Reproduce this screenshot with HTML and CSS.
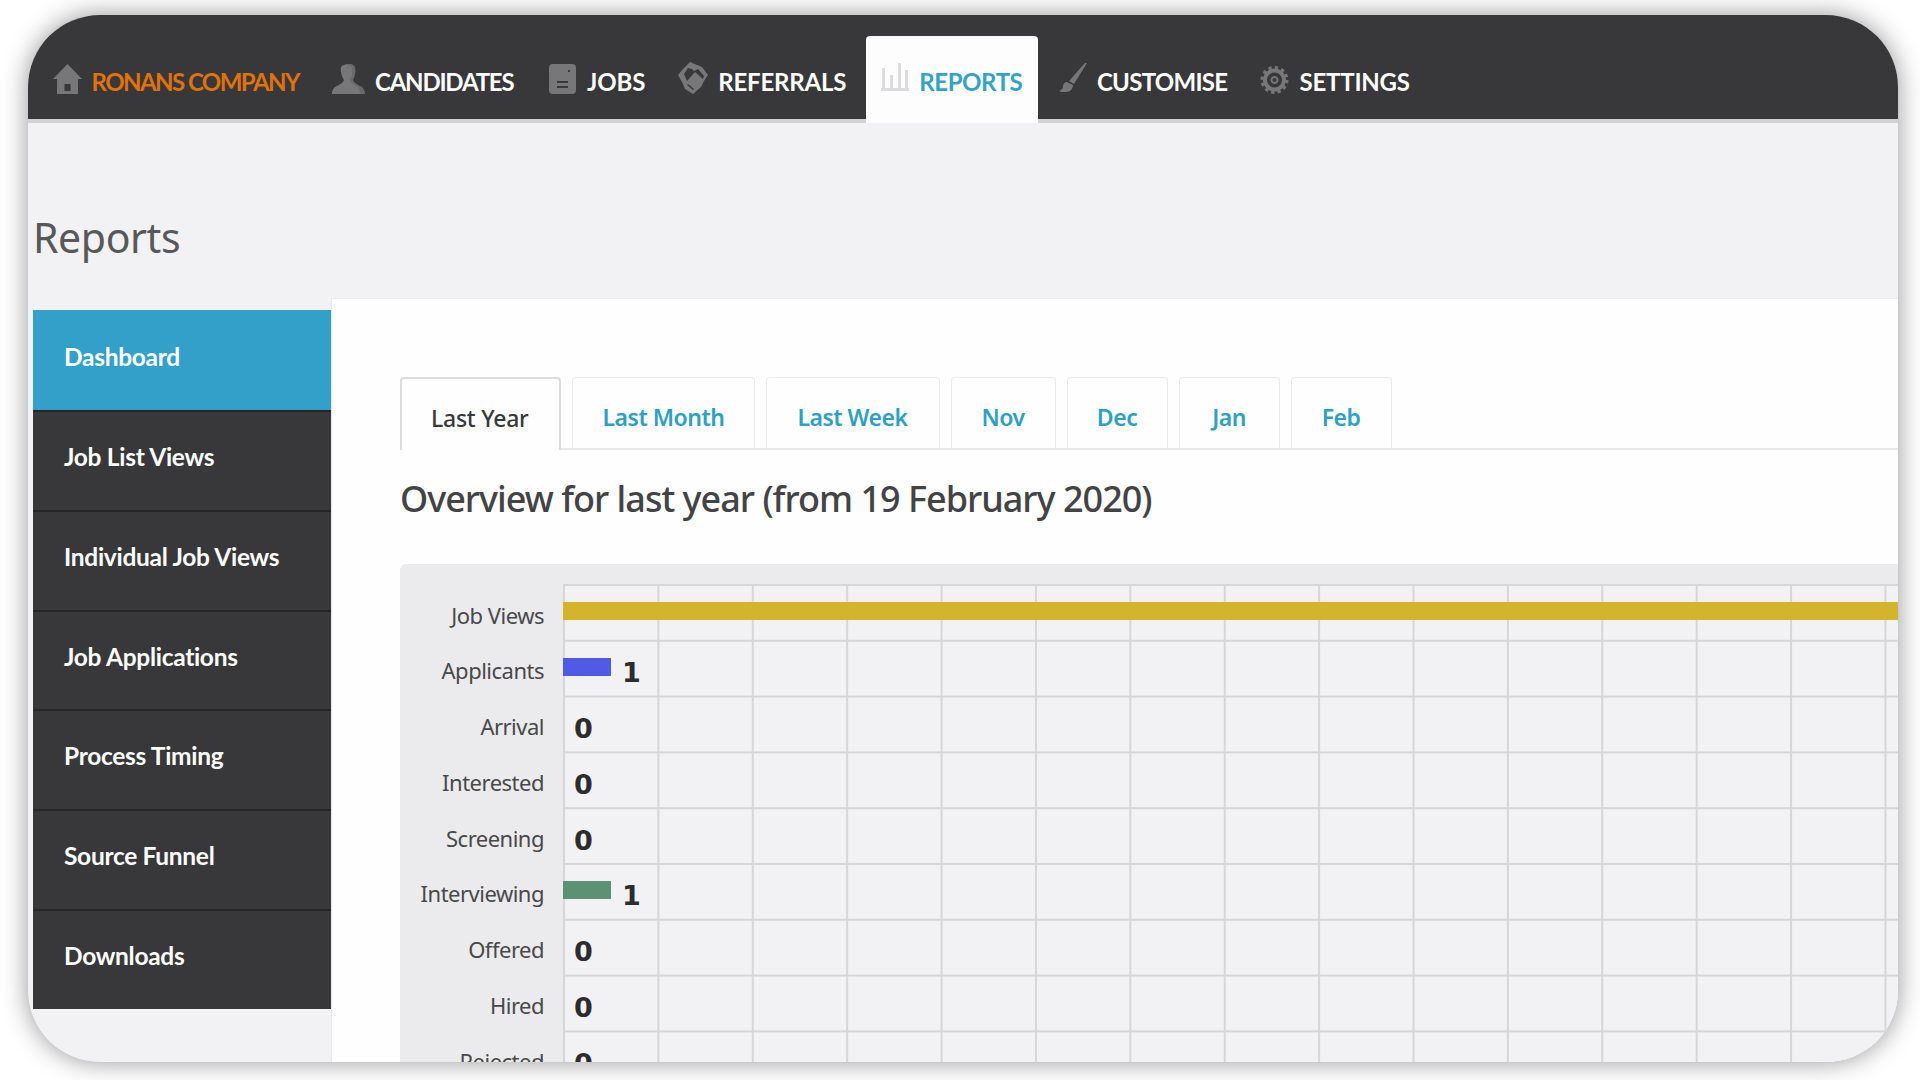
FILE: index.html
```html
<!DOCTYPE html>
<html lang="en">
<head>
<meta charset="utf-8">
<title>Reports</title>
<link rel="stylesheet" href="styles.css">
</head>
<body>
<div class="frame">
  <nav class="nav">
    <a class="nav-item">
      <svg class="ico w29" viewBox="0 0 29 30"><path d="M14.500 0 29 15h-4v15H4V15H0zM11.500 20v7h6v-7z" fill-rule="evenodd"/></svg>
      <span class="brand">RONANS COMPANY</span>
    </a>
    <a class="nav-item">
      <svg class="ico w33" viewBox="0 0 33 30"><path class="back" d="M12 1c3-2 9-2 11 2 1 4 0 9-2 13 1 3 4 4 7 6 3 1 5 4 5 8H14z"/><path d="M9 3c2-3 9-3 11 1 1 4 0 9-2 12 1 3 4 4 6 6 3 1 4 4 4 8H0c0-4 2-7 5-8 3-2 6-3 7-6-2-3-4-9-3-13z"/></svg>
      <span>CANDIDATES</span>
    </a>
    <a class="nav-item">
      <svg class="ico w27" viewBox="0 0 27 30"><path d="M4 0h19q4 0 4 4v22q0 4-4 4H4q-4 0-4-4V4q0-4 4-4zM19 6v2h2V6zM8 17v2h11v-2zM8 22v2h11v-2z" fill-rule="evenodd"/></svg>
      <span>JOBS</span>
    </a>
    <a class="nav-item">
      <svg class="ico w30 ref" viewBox="0 0 30 32"><path d="M12 0 24 5l6 8-4 6-3 6-8 7-8-5-3-7-4-7 5-6zM10 6 6 12l3 7 8-9 8 7 1-3-6-7-4 2-2-2zM9 23l6 5 1-1-6-5z" fill-rule="evenodd"/></svg>
      <span>REFERRALS</span>
    </a>
    <a class="nav-item active">
      <svg class="ico w28 pale" viewBox="0 0 28 28"><path d="M1 5h3v23H1zM9 12h3v16H9zM17 0h3v28h-3zM24 7h3v21h-3zM0 25h28v3H0z"/></svg>
      <span>REPORTS</span>
    </a>
    <a class="nav-item">
      <svg class="ico w28 brush" viewBox="0 0 28 30"><path d="M26 0h2L15 21l-5-3zM8 19l6 3c0 4-3 7-7 7-3 0-6 0-7-1 3-1 4-3 4-5s2-4 4-4z"/></svg>
      <span>CUSTOMISE</span>
    </a>
    <a class="nav-item">
      <svg class="ico w29 gear" viewBox="0 0 29 30"><circle class="teeth" cx="14.500" cy="15" r="12.500"/><path d="M14.500 3.500a11.500 11.500 0 1 0 .01 0zM14.500 7.500a7.500 7.500 0 1 1-.01 0zM14.500 11a4 4 0 1 0 .01 0zM14.500 13a2 2 0 1 1-.01 0z" fill-rule="evenodd"/></svg>
      <span>SETTINGS</span>
    </a>
  </nav>
  <div class="nav-rule"></div>
  <main class="page">
    <h1 class="title">Reports</h1>
    <div class="body">
      <ul class="side">
        <li class="side-item current">Dashboard</li>
        <li class="side-item">Job List Views</li>
        <li class="side-item">Individual Job Views</li>
        <li class="side-item">Job Applications</li>
        <li class="side-item">Process Timing</li>
        <li class="side-item">Source Funnel</li>
        <li class="side-item">Downloads</li>
      </ul>
      <section class="content">
        <div class="tabs">
          <a class="tab on">Last Year</a>
          <a class="tab">Last Month</a>
          <a class="tab">Last Week</a>
          <a class="tab short wide">Nov</a>
          <a class="tab short">Dec</a>
          <a class="tab short">Jan</a>
          <a class="tab short">Feb</a>
        </div>
        <h2 class="heading">Overview for last year (from 19 February 2020)</h2>
        <div class="chart">
          <div class="labels">
            <div class="label">Job Views</div>
            <div class="label">Applicants</div>
            <div class="label">Arrival</div>
            <div class="label">Interested</div>
            <div class="label">Screening</div>
            <div class="label">Interviewing</div>
            <div class="label">Offered</div>
            <div class="label">Hired</div>
            <div class="label">Rejected</div>
          </div>
          <div class="plot">
            <div class="row"><i class="bar gold"></i></div>
            <div class="row"><i class="bar blue"></i><b class="val">1</b></div>
            <div class="row"><b class="val zero">0</b></div>
            <div class="row"><b class="val zero">0</b></div>
            <div class="row"><b class="val zero">0</b></div>
            <div class="row"><i class="bar green"></i><b class="val">1</b></div>
            <div class="row"><b class="val zero">0</b></div>
            <div class="row"><b class="val zero">0</b></div>
            <div class="row"><b class="val zero">0</b></div>
          </div>
        </div>
      </section>
    </div>
  </main>
</div>
</body>
</html>
```
FILE: styles.css
```css
* { box-sizing: border-box; }
html, body { margin: 0; height: 100%; }
body { background: #fff; overflow: hidden; font-family: "Noto Sans", "Liberation Sans", sans-serif; }
.frame {
  width: 1870px; height: 1047px; margin: 15px 0 0 28px;
  background: #f2f2f4; border-radius: 72px; overflow: hidden;
  position: relative;
  box-shadow: 0 0 26px rgba(0,0,0,.42);
  display: flex; flex-direction: column;
}
.nav { flex: none; height: 104px; background: #38383a; display: flex; align-items: flex-end; padding-left: 8px; position: relative; z-index: 1; }
.nav-item {
  height: 84px; padding: 29px 16.500px 0; display: flex; align-items: flex-start; gap: 10px;
  font-family: Lato, sans-serif; font-weight: 700; font-size: 24px; line-height: 40px; letter-spacing: -.7px; color: #fff;
}
.nav-item span { margin-top: -2px; }
.nav-item span.brand { color: #e0720c; letter-spacing: -1.55px; }
.nav-item:nth-child(2) { letter-spacing: -1.2px; padding-right: 19px; }
.nav-item:nth-child(3) { letter-spacing: -.1px; gap: 11px; }
.nav-item:nth-child(4) { letter-spacing: -.2px; padding-right: 17px; }
.nav-item:nth-child(7) { letter-spacing: -.2px; }
.nav-item.active { background: #fdfdfe; border-radius: 4px 4px 0 0; height: 87px; margin: 0 4px -4px 3px; padding: 27px 16px 0 15px; color: #33a2c6; letter-spacing: -.4px; }
.nav-item.active span { margin-top: -1px; }
.ico { height: 30px; fill: #777779; flex: none; }
.ico .back { fill: #69696b; }
.ico .teeth { fill: none; stroke: #777779; stroke-width: 3; stroke-dasharray: 3.300 3.240; }
.ico.pale { fill: #dcdcde; height: 28px; }
.ico.ref { height: 32px; margin-top: -2px; }
.ico.brush { margin-top: -1px; }
.ico.gear { margin-top: 1px; }
.w27 { width: 27px; } .w28 { width: 28px; } .w29 { width: 29px; } .w30 { width: 30px; } .w33 { width: 33px; }
.nav-rule { flex: none; height: 4px; background: #d2d2d4; }
.page { flex: 1; min-height: 0; padding-left: 5px; display: flex; flex-direction: column; }
.title { margin: 0; height: 175px; padding-top: 84px; font-size: 41px; line-height: 60px; font-weight: 400; color: #58585a; letter-spacing: -.4px; }
.body { flex: 1; min-height: 0; display: flex; align-items: stretch; }
.side { list-style: none; margin: 12px 0 0; padding: 0; width: 298px; flex: none; align-self: flex-start; }
.side-item {
  height: 99.800px; padding: 25px 0 0 31px; background: #38383a; border-top: 2px solid #262628;
  font-family: Lato, sans-serif; font-weight: 700; font-size: 24.500px; line-height: 40px; letter-spacing: -.3px; color: #fff;
}
.side-item.current { background: #33a0c9; border-top: 0; height: 100px; padding-top: 27px; }
.content { flex: 1; min-width: 0; background: #fefeff; border-top: 1px solid #eaeaec; border-left: 1px solid #e6e6e8; padding: 78px 0 0 68px; overflow: hidden; }
.tabs { display: flex; gap: 11px; height: 73px; border-bottom: 2px solid #e8e8ea; }
.tab {
  height: 73px; padding: 21px 30px 0; font-size: 23px; line-height: 36px; font-weight: 600; letter-spacing: -.5px; color: #2fa0c4;
  border: 1px solid #ececee; border-bottom: 0; border-radius: 4px 4px 0 0;
}
.tab:nth-child(3) { padding-right: 31px; }
.tab.short { width: 101px; padding-left: 0; padding-right: 0; text-align: center; }
.tab.wide { width: 105px; }
.tab.on { background: #fefeff; border: 2px solid #dcdcde; border-bottom: 0; color: #38383a; font-weight: 500; padding-left: 29px; padding-right: 30px; letter-spacing: -.25px; }
.heading { margin: 0; height: 114px; padding-top: 25px; font-size: 36px; line-height: 48px; font-weight: 500; letter-spacing: -1px; color: #434345; white-space: nowrap; }
.chart { width: 1600px; background: #ebebed; border-radius: 6px 0 0 0; padding-top: 20px; display: flex; height: 560px; }
.labels { width: 163px; flex: none; }
.label { height: 55.800px; padding: 12.500px 19px 0 0; text-align: right; font-size: 22px; line-height: 36px; color: #48484a; letter-spacing: -.5px; }
.plot {
  flex: 1; background-color: #f2f2f4;
  background-image: linear-gradient(#d6d6d9 2px, transparent 2px), linear-gradient(90deg, #d6d6d9 2px, transparent 2px);
  background-size: 94.400px 55.800px;
  height: 540px;
}
.row { height: 55.800px; padding-top: 18px; display: flex; align-items: flex-start; }
.bar { display: block; height: 18px; flex: none; }
.gold { width: 1400px; background: #d4b32d; }
.blue { width: 48px; background: #4f5ae5; }
.green { width: 48px; background: #5a9273; }
.val { font-family: "DejaVu Sans", sans-serif; font-weight: 700; font-size: 27px; line-height: 30px; color: #2c2c2e; margin: .5px 0 0 11px; }
.val.zero { margin-left: 11px; }
```
